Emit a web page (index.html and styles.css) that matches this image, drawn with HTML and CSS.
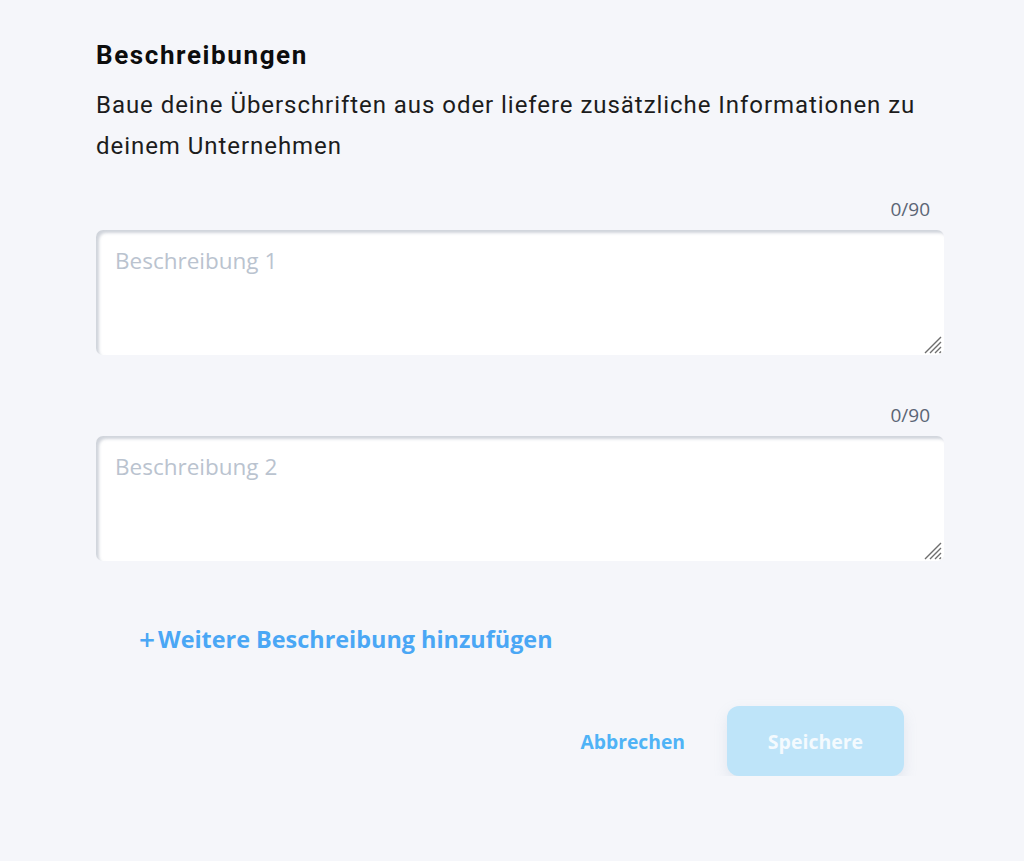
FILE: index.html
```html
<!DOCTYPE html>
<html lang="de">
<head>
<meta charset="utf-8">
<link rel="stylesheet" href="styles.css">
</head>
<body>
<div class="page">
  <h2 class="title">Beschreibungen</h2>
  <p class="intro">Baue deine Überschriften aus oder liefere zusätzliche Informationen zu deinem Unternehmen</p>

  <div class="field">
    <div class="counter">0/90</div>
    <div class="area-wrap">
      <textarea class="area" placeholder="Beschreibung 1"></textarea>
      <svg class="grip" viewBox="0 0 20 20" width="20" height="20" aria-hidden="true">
        <path d="M19 3 L3 19 M19 8 L8 19 M19 13 L13 19 M19 17.5 L17.5 19" stroke="#6e6e6e" stroke-width="1.4" fill="none"/>
      </svg>
    </div>
  </div>
  <div class="field">
    <div class="counter">0/90</div>
    <div class="area-wrap">
      <textarea class="area" placeholder="Beschreibung 2"></textarea>
      <svg class="grip" viewBox="0 0 20 20" width="20" height="20" aria-hidden="true">
        <path d="M19 3 L3 19 M19 8 L8 19 M19 13 L13 19 M19 17.5 L17.5 19" stroke="#6e6e6e" stroke-width="1.4" fill="none"/>
      </svg>
    </div>
  </div>

  <a class="add-link" href="#"><span class="plus">+</span>Weitere Beschreibung hinzufügen</a>

  <div class="actions">
    <button class="btn-cancel" type="button">Abbrechen</button>
    <button class="btn-save" type="button">Speichere</button>
  </div>
</div>
</body>
</html>
```
FILE: styles.css
```css
html, body {
  margin: 0;
  padding: 0;
  background: #f5f6fa;
}
.page {
  width: 848px;
  padding: 40px 0 0 96px;
  display: flex;
  flex-direction: column;
}
.title {
  margin: 0;
  font-family: Roboto, "Liberation Sans", sans-serif;
  font-weight: 700;
  font-size: 26px;
  letter-spacing: 1.6px;
  line-height: 30px;
  color: #0d0d0d;
}
.intro {
  margin: 15px 0 0 0;
  font-family: Roboto, "Liberation Sans", sans-serif;
  font-size: 24px;
  letter-spacing: 0.95px;
  line-height: 41px;
  color: #1c1c1c;
  max-width: 840px;
}
.field {
  display: flex;
  flex-direction: column;
  margin-top: 29px;
}
.field + .field {
  margin-top: 47px;
}
.counter {
  align-self: flex-end;
  margin-right: 14px;
  font-family: "Open Sans", "Noto Sans", sans-serif;
  font-size: 19px;
  line-height: 26px;
  color: #5b6575;
  margin-bottom: 8px;
}
.area-wrap {
  position: relative;
}
.area {
  box-sizing: border-box;
  width: 848px;
  height: 125px;
  border: none;
  border-radius: 7px;
  background: #ffffff;
  box-shadow: inset 3px 3px 3px rgba(150, 160, 175, 0.45);
  padding: 16px 19px;
  font-family: "Open Sans", "Noto Sans", sans-serif;
  font-size: 22.5px;
  line-height: 30px;
  color: #333;
  outline: none;
  resize: none;
  margin: 0;
  display: block;
}
.area::placeholder {
  color: #bac3cf;
}
.grip {
  position: absolute;
  right: 2px;
  bottom: 1px;
  pointer-events: none;
}
.add-link {
  margin: 63px 0 0 43px;
  align-self: flex-start;
  font-family: "Open Sans", "Noto Sans", sans-serif;
  font-weight: 700;
  font-size: 23.4px;
  line-height: 30px;
  color: #4aa7f5;
  text-decoration: none;
  display: flex;
  align-items: center;
}
.plus {
  font-size: 28px;
  font-weight: 600;
  margin-right: 3px;
  line-height: 30px;
}
.actions {
  margin: 52px 40px 0 0;
  display: flex;
  justify-content: flex-end;
  align-items: center;
  gap: 42px;
}
.btn-cancel {
  border: none;
  background: none;
  padding: 0;
  font-family: "Open Sans", "Noto Sans", sans-serif;
  font-weight: 700;
  font-size: 19.3px;
  color: #4fb3f6;
  cursor: pointer;
}
.btn-save {
  width: 177px;
  height: 70px;
  border: none;
  border-radius: 12px;
  background: #bee4f9;
  color: #f4fafe;
  font-family: "Open Sans", "Noto Sans", sans-serif;
  font-weight: 700;
  font-size: 19.5px;
  box-shadow: 0 6px 14px rgba(140, 160, 190, 0.18);
}
```
